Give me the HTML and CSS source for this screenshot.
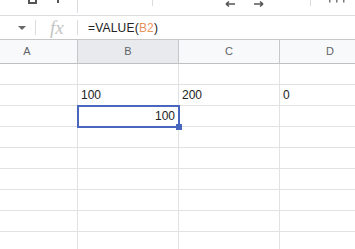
FILE: index.html
```html
<!DOCTYPE html>
<html lang="en">
<head>
  <meta charset="UTF-8">
  <title>Sheet</title>
  <link rel="stylesheet" href="styles.css">
</head>
<body>
  <div class="toolbar">
    <span class="tool-box"></span>
    <span class="tool-t"></span>
    <span class="tool-sep sep-a"></span>
    <span class="tool-sep sep-b"></span>
    <svg class="tool-arrows" width="50" height="8" viewBox="0 0 50 8">
      <path d="M2 4h9M2 4l3-2.5M2 4l3 2.5" stroke="#555" stroke-width="1.6" fill="none"/>
      <path d="M30 4h9M39 4l-3-2.5M39 4l-3 2.5" stroke="#555" stroke-width="1.6" fill="none"/>
    </svg>
    <span class="tool-sep sep-c"></span>
    <svg class="tool-dots" width="20" height="4" viewBox="0 0 20 4">
      <rect x="1" y="0" width="1.5" height="2.5" fill="#777"/>
      <rect x="8" y="0" width="1.5" height="2.5" fill="#777"/>
      <rect x="15" y="0" width="1.5" height="2.5" fill="#777"/>
    </svg>
  </div>

  <div class="formula-bar">
    <div class="name-box"><span class="caret"></span></div>
    <div class="fx">fx</div>
    <div class="formula">=VALUE(<span class="ref">B2</span>)</div>
  </div>

  <div class="sheet">
    <div class="head">A</div>
    <div class="head active">B</div>
    <div class="head">C</div>
    <div class="head">D</div>

    <div class="cell"></div><div class="cell"></div><div class="cell"></div><div class="cell"></div>
    <div class="cell"></div><div class="cell">100</div><div class="cell">200</div><div class="cell">0</div>
    <div class="cell"></div><div class="cell num selected">100</div><div class="cell"></div><div class="cell"></div>
    <div class="cell"></div><div class="cell"></div><div class="cell"></div><div class="cell"></div>
    <div class="cell"></div><div class="cell"></div><div class="cell"></div><div class="cell"></div>
    <div class="cell"></div><div class="cell"></div><div class="cell"></div><div class="cell"></div>
    <div class="cell"></div><div class="cell"></div><div class="cell"></div><div class="cell"></div>
    <div class="cell"></div><div class="cell"></div><div class="cell"></div><div class="cell"></div>
    <div class="cell"></div><div class="cell"></div><div class="cell"></div><div class="cell"></div>
  </div>
</body>
</html>
```

FILE: styles.css
```css
body {
  margin: 0;
  width: 355px;
  height: 249px;
  overflow: hidden;
  background: #fff;
  font-family: 'Liberation Sans', Arial, sans-serif;
  color: #222;
}

/* toolbar, mostly cut off at the top */
.toolbar {
  height: 15px;
  border-bottom: 1px solid #dadce0;
  position: relative;
  overflow: hidden;
}
.tool-box {
  position: absolute;
  left: 28px;
  top: -6px;
  width: 5px;
  height: 6px;
  border: 2px solid #555;
}
.tool-t {
  position: absolute;
  left: 57px;
  top: -2px;
  width: 2px;
  height: 5px;
  background: #555;
}
.tool-sep {
  position: absolute;
  top: 0;
  width: 1px;
  background: #dadce0;
}
.sep-a { left: 77px; height: 13px; }
.sep-b { left: 152px; height: 6px; }
.sep-c { left: 310px; height: 6px; }
.tool-arrows {
  position: absolute;
  left: 224px;
  top: 0;
}
.tool-dots {
  position: absolute;
  left: 328px;
  top: 0;
}

/* formula bar */
.formula-bar {
  height: 23px;
  display: flex;
  align-items: center;
}
.name-box {
  width: 36px;
  height: 15px;
  border-right: 1px solid #dadce0;
  display: flex;
  align-items: center;
  justify-content: flex-end;
  padding-right: 9px;
  box-sizing: border-box;
}
.caret {
  width: 0;
  height: 0;
  border-left: 4px solid transparent;
  border-right: 4px solid transparent;
  border-top: 4px solid #666;
}
.fx {
  width: 42px;
  height: 15px;
  border-right: 1px solid #dadce0;
  font-family: 'Liberation Serif', serif;
  font-style: italic;
  font-size: 19px;
  line-height: 15px;
  color: #c4c4c4;
  padding-left: 14px;
  box-sizing: border-box;
}
.formula {
  padding-left: 10px;
  font-size: 12px;
  letter-spacing: 0.2px;
  color: #222;
}
.ref {
  color: #e8935a;
}

/* grid */
.sheet {
  display: grid;
  grid-template-columns: repeat(4, 101px);
  margin-left: -23px;
}
.head {
  height: 25px;
  box-sizing: border-box;
  border-top: 1px solid #c7c7c7;
  border-bottom: 1px solid #c0c0c0;
  border-right: 1px solid #c7c7c7;
  background: #f8f9fa;
  color: #5f6368;
  font-size: 11px;
  line-height: 23px;
  text-align: center;
}
.head.active {
  background: #e8eaed;
}
.cell {
  height: 21px;
  box-sizing: border-box;
  border-right: 1px solid #e2e2e3;
  border-bottom: 1px solid #e2e2e3;
  font-size: 12px;
  line-height: 20px;
  padding: 0 3px;
  color: #222;
}
.cell.num {
  text-align: right;
}
.selected {
  position: relative;
}
.selected::before {
  content: '';
  position: absolute;
  left: -1px;
  top: -1px;
  right: -2px;
  bottom: -2px;
  border: 2px solid #4a67c0;
}
.selected::after {
  content: '';
  position: absolute;
  right: -4px;
  bottom: -4px;
  width: 6px;
  height: 6px;
  background: #4a67c0;
}
```
